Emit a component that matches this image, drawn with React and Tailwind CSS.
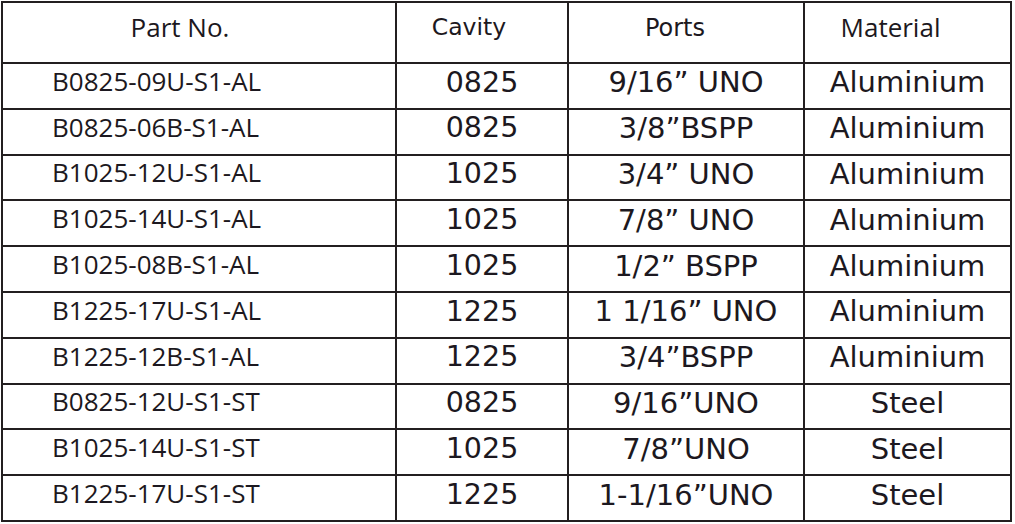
const rows = [
  ['B0825-09U-S1-AL', '0825', '9/16\u201D UNO', 'Aluminium'],
  ['B0825-06B-S1-AL', '0825', '3/8\u201DBSPP', 'Aluminium'],
  ['B1025-12U-S1-AL', '1025', '3/4\u201D UNO', 'Aluminium'],
  ['B1025-14U-S1-AL', '1025', '7/8\u201D UNO', 'Aluminium'],
  ['B1025-08B-S1-AL', '1025', '1/2\u201D BSPP', 'Aluminium'],
  ['B1225-17U-S1-AL', '1225', '1 1/16\u201D UNO', 'Aluminium'],
  ['B1225-12B-S1-AL', '1225', '3/4\u201DBSPP', 'Aluminium'],
  ['B0825-12U-S1-ST', '0825', '9/16\u201DUNO', 'Steel'],
  ['B1025-14U-S1-ST', '1025', '7/8\u201DUNO', 'Steel'],
  ['B1225-17U-S1-ST', '1225', '1-1/16\u201DUNO', 'Steel'],
];

const myriad = "font-['Open_Sans',sans-serif]";
const verdana = "font-['DejaVu_Sans',sans-serif]";

export default function App() {
  return (
    <div className="w-[1015px] h-[524px] bg-white pl-[1px] pt-[1px] text-[#1c1820]">
      <div className="grid w-[1011px] grid-cols-[394px_172px_236px_207px] grid-rows-[61px_repeat(10,45.8px)] border-l-2 border-t-2 border-[#231f20]">
        {/* header */}
        <div className={`flex items-center justify-center border-r-2 border-b-2 border-[#231f20] pr-[38px] pb-[12px] text-[26px] leading-none ${myriad}`}>
          Part No.
        </div>
        <div className={`flex items-center justify-center border-r-2 border-b-2 border-[#231f20] pr-[26px] pb-[10px] text-[23.5px] leading-none ${verdana}`}>
          Cavity
        </div>
        <div className={`flex items-center justify-center border-r-2 border-b-2 border-[#231f20] pr-[22px] pb-[10px] text-[24px] leading-none ${verdana}`}>
          Ports
        </div>
        <div className={`flex items-center justify-center border-r-2 border-b-2 border-[#231f20] pr-[34px] pb-[12px] text-[26px] leading-none ${myriad}`}>
          Material
        </div>

        {rows.map((r) => (
          <div key={r[0]} className="contents">
            <div className={`flex items-center border-r-2 border-b-2 border-[#231f20] pl-[49px] pb-[10px] text-[26px] leading-none ${myriad}`}>
              {r[0]}
            </div>
            <div className={`flex items-center justify-center border-r-2 border-b-2 border-[#231f20] pb-[6px] text-[28.5px] leading-none ${verdana}`}>
              {r[1]}
            </div>
            <div className={`flex items-center justify-center border-r-2 border-b-2 border-[#231f20] pb-[6px] text-[29px] leading-none ${verdana}`}>
              {r[2]}
            </div>
            <div className={`flex items-center justify-center border-r-2 border-b-2 border-[#231f20] pb-[6px] text-[29px] leading-none ${verdana}`}>
              {r[3]}
            </div>
          </div>
        ))}
      </div>
    </div>
  );
}
